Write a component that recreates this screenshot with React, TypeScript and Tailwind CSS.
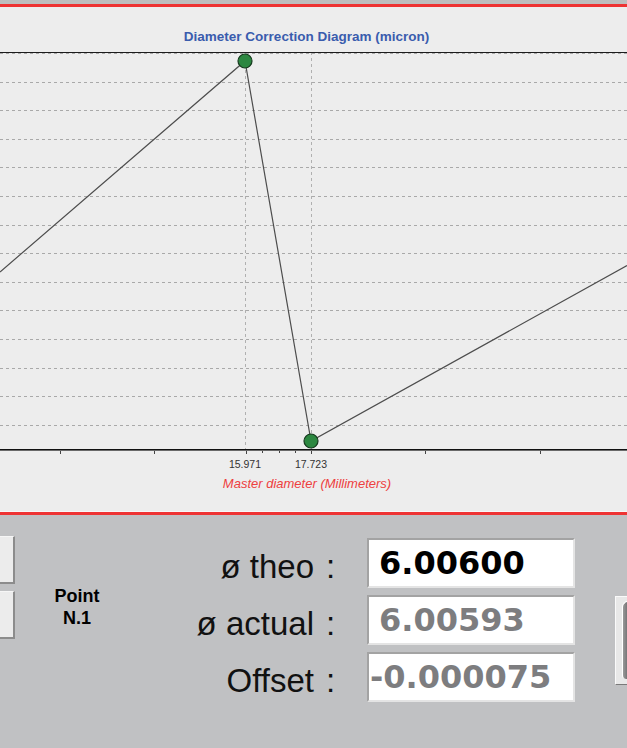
import React from "react";

// plot geometry, in page pixels (the svg viewBox starts at y = 45)
const TOP = 52;
const BOTTOM = 449;
const gridRows = Array.from({ length: 14 }, (_, k) => Math.round(53 + k * 28.6));
const ticks = [
  { x: 60, major: true },
  { x: 154, major: true },
  { x: 246, major: true },
  { x: 262, major: false },
  { x: 279, major: false },
  { x: 295, major: false },
  { x: 311, major: true },
  { x: 425, major: true },
  { x: 540, major: true },
];
const points = [
  { x: 245, y: 61, label: "15.971" },
  { x: 311, y: 441, label: "17.723" },
];

const readings = [
  { label: "ø theo", value: "6.00600", tone: "text-black", pad: "pl-[10px]" },
  { label: "ø actual", value: "6.00593", tone: "text-[#7d7d7f]", pad: "pl-[10px]" },
  { label: "Offset", value: "-0.000075", tone: "text-[#7d7d7f]", pad: "pl-[1px]" },
];

function CorrectionChart() {
  return (
    <svg width={627} height={431} viewBox="0 45 627 431" className="block">
      {gridRows.map((y) => (
        <line key={y} x1={0} x2={627} y1={y + 0.5} y2={y + 0.5} stroke="#a9a9a9" strokeDasharray="3 3" />
      ))}
      {points.map((p) => (
        <line
          key={p.label}
          x1={p.x + 0.5}
          x2={p.x + 0.5}
          y1={TOP}
          y2={BOTTOM}
          stroke="#b0b0b0"
          strokeDasharray="3 3"
        />
      ))}
      <line x1={0} x2={627} y1={TOP + 0.5} y2={TOP + 0.5} stroke="#1c1c1c" />
      <line x1={0} x2={627} y1={BOTTOM + 0.5} y2={BOTTOM + 0.5} stroke="#111" />
      <line x1={0} x2={627} y1={BOTTOM + 1.5} y2={BOTTOM + 1.5} stroke="#6a6a6a" />
      {ticks.map((t) => (
        <line
          key={t.x}
          x1={t.x + 0.5}
          x2={t.x + 0.5}
          y1={BOTTOM + 2}
          y2={BOTTOM + (t.major ? 5 : 4)}
          stroke="#444"
        />
      ))}
      <polyline
        points="0,272 245,61 311,441 627,265.6"
        fill="none"
        stroke="#4d4d4d"
        strokeWidth={1.2}
      />
      {points.map((p) => (
        <circle key={p.x} cx={p.x} cy={p.y} r={7} fill="#2c8740" stroke="#163a1e" strokeWidth={1.2} />
      ))}
      {points.map((p) => (
        <text
          key={p.label + "t"}
          x={p.x}
          y={468}
          textAnchor="middle"
          fontSize={10.5}
          fill="#333"
          fontFamily="'Liberation Sans', Arial, sans-serif"
        >
          {p.label}
        </text>
      ))}
    </svg>
  );
}

function SideButton() {
  return (
    <div className="h-[48px] w-[15px] bg-[#ececec] border-t border-t-[#f6f6f6] border-r-2 border-r-[#8c8c8c] border-b-2 border-b-[#8c8c8c]" />
  );
}

export default function App() {
  return (
    <div className="w-[627px] h-[748px] overflow-hidden bg-[#c0c1c3] font-['Liberation_Sans',Arial,sans-serif]">
      <div className="h-[4px] bg-[#bebebe]" />
      <div className="h-[3px] bg-[#ee3333]" />

      {/* chart panel */}
      <div className="h-[505px] bg-[#ededed] pt-[22px] border-b border-b-[#f7f7f7]">
        <div className="h-[16px] pr-[14px] text-center text-[13.5px] leading-[16px] font-bold text-[#3a5cad]">
          Diameter Correction Diagram (micron)
        </div>
        <CorrectionChart />
        <div className="h-[16px] pr-[13px] text-center text-[13px] leading-[16px] italic text-[#ee4040]">
          Master diameter (Millimeters)
        </div>
      </div>
      <div className="h-[3px] bg-[#ee3333]" />

      {/* readout panel */}
      <div className="flex h-[232px]">
        <div className="flex shrink-0 flex-col gap-[7px] pt-[21px]">
          <SideButton />
          <SideButton />
        </div>

        <div className="w-[124px] shrink-0 pt-[70px] text-center text-[18px] leading-[22px] font-bold text-black">
          <div>Point</div>
          <div>N.1</div>
        </div>

        <div className="flex shrink-0 flex-col gap-[7px] pt-[23px]">
          {readings.map((r) => (
            <div key={r.label} className="flex h-[50px] items-start">
              <div className="w-[175px] h-[50px] text-right text-[33px] leading-[58px] text-[#111] whitespace-nowrap">
                {r.label}
              </div>
              <div className="w-[53px] h-[50px] pl-[12px] text-[33px] leading-[58px] text-[#111]">:</div>
              <div
                className={`w-[208px] h-[50px] flex items-center bg-white border-2 border-t-[#a3a3a3] border-l-[#a3a3a3] border-b-[#e4e4e4] border-r-[#e4e4e4] ${r.pad}`}
              >
                <span className={`font-['DejaVu_Sans',Verdana,sans-serif] font-bold text-[32px] leading-none ${r.tone}`}>
                  {r.value}
                </span>
              </div>
            </div>
          ))}
        </div>

        {/* partially visible action button */}
        <div className="ml-[40px] mt-[81px] h-[89px] w-[30px] shrink-0 bg-[#e8e8e8] border border-t-[#fafafa] border-l-[#fafafa] border-b-[#7a7a7a] border-r-[#7a7a7a] pt-[4px] pl-[6px]">
          <div className="h-[78px] w-[20px] rounded-tl-[6px] rounded-bl-[4px] bg-gradient-to-r from-[#9a9a9a] via-[#4a4a4c] to-[#3e3e40] border-l border-t border-white" />
        </div>
      </div>
    </div>
  );
}
